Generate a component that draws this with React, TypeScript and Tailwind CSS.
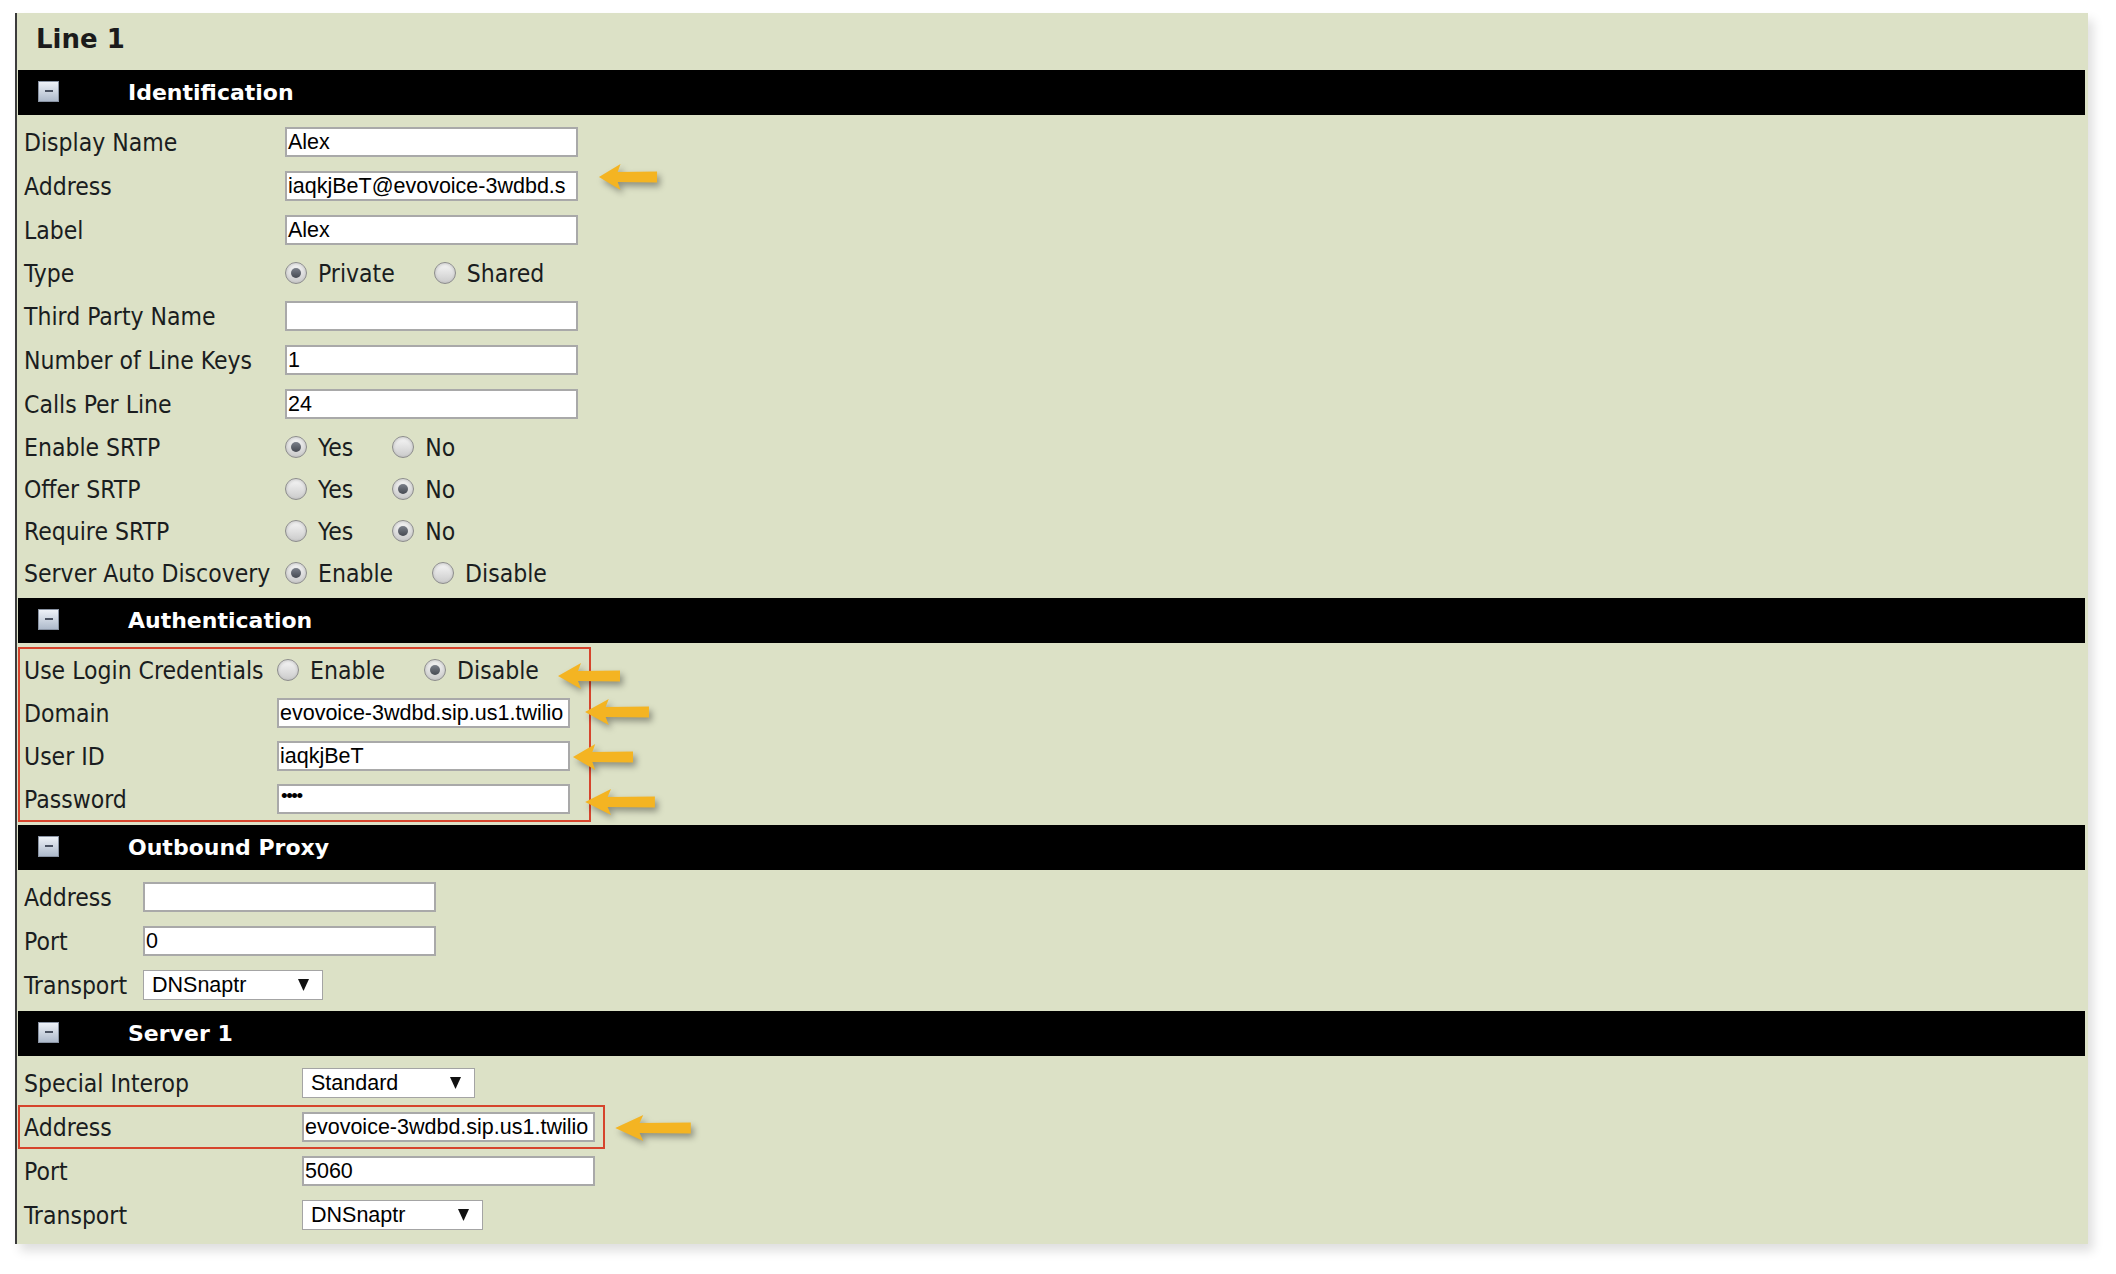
import React from "react";

const LABEL =
  "font-['DejaVu_Sans_Condensed','DejaVu_Sans',sans-serif] font-stretch-condensed text-[24.5px] leading-none text-[#1a1d20] whitespace-nowrap pt-[3px]";
const FIELD = "font-['Liberation_Sans',Arial,sans-serif] text-[21.5px] leading-none text-black";

function MinusIcon() {
  return (
    <div className="w-[21px] h-[21px] -mt-[3px] border border-[#8993a3] bg-linear-to-b from-[#eef2f8] to-[#aebacb] flex items-center justify-center">
      <div className="w-[8px] h-[2px] bg-[#4a5262]" />
    </div>
  );
}

function Bar({ title }: { title: string }) {
  return (
    <div className="ml-[1px] mr-[3px] h-[45px] bg-black flex items-center pl-[20px]">
      <MinusIcon />
      <span className="ml-[69px] text-white font-bold text-[22px] font-['DejaVu_Sans',Verdana,sans-serif]">
        {title}
      </span>
    </div>
  );
}

function TextBox({ value, password }: { value: string; password?: boolean }) {
  return (
    <div className={`w-[293px] h-[30px] bg-white border-2 border-[#a9a9a9] flex items-center pl-[1px] pt-[2px] overflow-hidden whitespace-nowrap ${FIELD}`}>
      {password ? <span className="text-[19px] tracking-[-1.5px] -mt-[9px] pl-[1px]">••••</span> : value}
    </div>
  );
}

function Select({ value, width }: { value: string; width: string }) {
  return (
    <div className={`${width} h-[30px] bg-white border border-[#a4a4a4] flex items-center justify-between pl-[8px] pr-[13px] ${FIELD}`}>
      <span className="pt-[2px]">{value}</span>
      <svg width="11" height="12" viewBox="0 0 11 12">
        <path d="M0 0 H11 L5.5 12 Z" fill="#111" />
      </svg>
    </div>
  );
}

function Radio({ checked }: { checked?: boolean }) {
  return (
    <span className="w-[22px] h-[22px] rounded-full border border-[#8c8c8c] bg-linear-to-b from-[#f7f7f7] to-[#cbcbcb] shadow-[inset_0_1px_3px_rgba(0,0,0,0.18)] flex items-center justify-center shrink-0">
      {checked && <span className="w-[10px] h-[10px] rounded-full bg-linear-to-b from-[#7b808a] to-[#464a52]" />}
    </span>
  );
}

function Row({ label, col, pad = "pl-[7px]", h = "h-[44px]", children }: {
  label: string; col: string; pad?: string; h?: string; children: React.ReactNode;
}) {
  return (
    <div className={`flex items-center ${h} ${pad}`}>
      <div className={`${col} shrink-0 ${LABEL}`}>{label}</div>
      {children}
    </div>
  );
}

function Radios({ options, checked }: { options: [string, string]; checked: 0 | 1 }) {
  return (
    <div className="flex items-center">
      {options.map((o, i) => (
        <div key={o} className="flex items-center mr-[39px]">
          <Radio checked={checked === i} />
          <span className={`ml-[11px] ${LABEL}`}>{o}</span>
        </div>
      ))}
    </div>
  );
}

function Arrow({ className }: { className: string }) {
  return (
    <svg
      viewBox="0 0 64 30"
      preserveAspectRatio="none"
      className={`absolute h-[30px] drop-shadow-[3px_4px_3px_rgba(0,0,0,0.35)] ${className}`}
    >
      <path d="M1 15 L24 2 L21 10 L63 9.5 L63 20.5 L21 20 L24 28 Z" fill="#f4b422" />
    </svg>
  );
}

export default function App() {
  return (
    <div className="relative w-[2116px] h-[1274px] bg-white overflow-hidden pt-[13px] pl-[15px]">
      <div className="w-[2073px] bg-[#dce1c6] border-l-2 border-[#3b3b3b] shadow-[5px_7px_10px_rgba(0,0,0,0.13)] pb-[7px]">
        <div className="h-[57px] flex items-center pl-[19px] pb-[5px] font-['DejaVu_Sans',Verdana,sans-serif] font-bold text-[26px] text-[#1b1b1b]">
          Line 1
        </div>

        {/* Identification */}
        <Bar title="Identification" />
        <div className="pt-[5px] pb-[4px]">
          <Row label="Display Name" col="w-[261px]"><TextBox value="Alex" /></Row>
          <Row label="Address" col="w-[261px]"><TextBox value="iaqkjBeT@evovoice-3wdbd.s" /></Row>
          <Row label="Label" col="w-[261px]"><TextBox value="Alex" /></Row>
          <Row label="Type" col="w-[261px]" h="h-[42px]"><Radios options={["Private", "Shared"]} checked={0} /></Row>
          <Row label="Third Party Name" col="w-[261px]"><TextBox value="" /></Row>
          <Row label="Number of Line Keys" col="w-[261px]"><TextBox value="1" /></Row>
          <Row label="Calls Per Line" col="w-[261px]"><TextBox value="24" /></Row>
          <Row label="Enable SRTP" col="w-[261px]" h="h-[42px]"><Radios options={["Yes", "No"]} checked={0} /></Row>
          <Row label="Offer SRTP" col="w-[261px]" h="h-[42px]"><Radios options={["Yes", "No"]} checked={1} /></Row>
          <Row label="Require SRTP" col="w-[261px]" h="h-[42px]"><Radios options={["Yes", "No"]} checked={1} /></Row>
          <Row label="Server Auto Discovery" col="w-[261px]" h="h-[42px]"><Radios options={["Enable", "Disable"]} checked={0} /></Row>
        </div>

        {/* Authentication */}
        <Bar title="Authentication" />
        <div className="pt-[4px] pb-[3px]">
          <div className="ml-[1px] w-[573px] border-2 border-[#d6442c]">
            <Row label="Use Login Credentials" col="w-[253px]" pad="pl-[4px]" h="h-[42px]">
              <Radios options={["Enable", "Disable"]} checked={1} />
            </Row>
            <Row label="Domain" col="w-[253px]" pad="pl-[4px]" h="h-[43px]"><TextBox value="evovoice-3wdbd.sip.us1.twilio" /></Row>
            <Row label="User ID" col="w-[253px]" pad="pl-[4px]" h="h-[43px]"><TextBox value="iaqkjBeT" /></Row>
            <Row label="Password" col="w-[253px]" pad="pl-[4px]" h="h-[43px]"><TextBox value="" password /></Row>
          </div>
        </div>

        {/* Outbound Proxy */}
        <Bar title="Outbound Proxy" />
        <div className="pt-[5px] pb-[4px]">
          <Row label="Address" col="w-[119px]"><TextBox value="" /></Row>
          <Row label="Port" col="w-[119px]"><TextBox value="0" /></Row>
          <Row label="Transport" col="w-[119px]"><Select value="DNSnaptr" width="w-[180px]" /></Row>
        </div>

        {/* Server 1 */}
        <Bar title="Server 1" />
        <div className="pt-[5px]">
          <Row label="Special Interop" col="w-[278px]"><Select value="Standard" width="w-[173px]" /></Row>
          <div className="ml-[1px] w-[587px] border-2 border-[#d6442c]">
            <Row label="Address" col="w-[278px]" pad="pl-[4px]" h="h-[40px]"><TextBox value="evovoice-3wdbd.sip.us1.twilio" /></Row>
          </div>
          <Row label="Port" col="w-[278px]"><TextBox value="5060" /></Row>
          <Row label="Transport" col="w-[278px]"><Select value="DNSnaptr" width="w-[181px]" /></Row>
        </div>
      </div>

      {/* annotation arrows */}
      <Arrow className="left-[598px] top-[162px] w-[60px]" />
      <Arrow className="left-[557px] top-[661px] w-[64px]" />
      <Arrow className="left-[584px] top-[697px] w-[66px]" />
      <Arrow className="left-[572px] top-[742px] w-[62px]" />
      <Arrow className="left-[584px] top-[787px] w-[72px]" />
      <Arrow className="left-[614px] top-[1113px] w-[78px]" />
    </div>
  );
}
